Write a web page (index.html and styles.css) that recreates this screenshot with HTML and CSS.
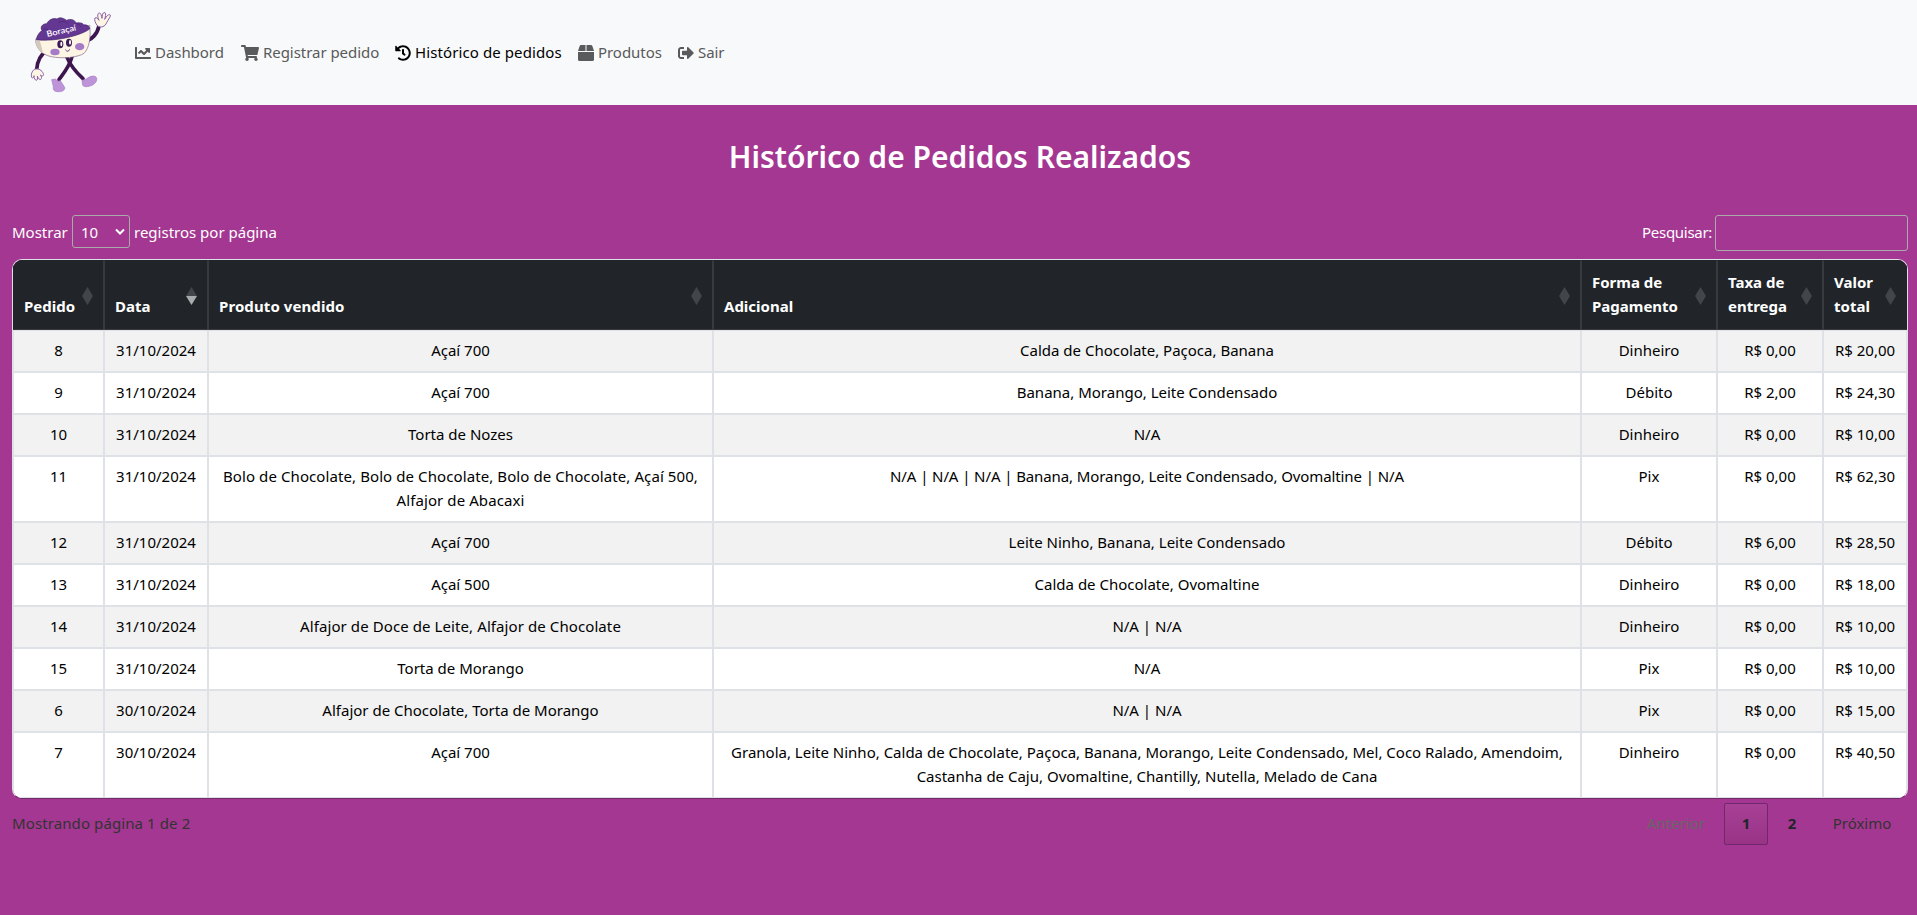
FILE: index.html
```
<!DOCTYPE html>
<html lang="pt-BR">
<head>
<meta charset="utf-8">
<title>Histórico de Pedidos</title>
<link rel="stylesheet" href="styles.css">
</head>
<body>
<nav class="navbar">
  <svg class="mascot" viewBox="0 0 390 315" aria-label="Boraçaí">
    <g fill="none" stroke="#3d164f" stroke-width="11" stroke-linecap="round">
      <path d="M252 123C276 121 292 101 297 78"/>
      <path d="M139 153C120 165 112 184 110 208"/>
      <path d="M201 172C213 201 232 220 249 236"/>
      <path d="M216 170C208 201 191 220 177 239"/>
    </g>
    <path d="M107 117C106 142 124 164 154 170C187 177 235 172 252 160C268 145 273 110 269 76Z" fill="#fdf5e4" stroke="#80628c" stroke-width="2"/>
    <path d="M107 117C106 138 116 153 130 161L120 124Z" fill="#d3c9bd"/>
    <path d="M109 119C111 105 119 98 126 91C119 82 127 71 140 71C146 60 158 53 171 57C181 49 194 57 200 61C212 54 226 61 228 69C240 67 249 69 251 75C260 73 269 79 269 87C240 108 163 126 109 119Z" fill="#643792" stroke="#46266c" stroke-width="2"/>
    <path d="M127 91Q134 82 144 89M176 68Q193 59 202 70M225 71Q237 68 243 81" fill="none" stroke="#53297f" stroke-width="3"/>
    <text class="brand" x="142" y="111" transform="rotate(-13 142 111)" textLength="90" lengthAdjust="spacingAndGlyphs">Boraçaí</text>
    <g fill="#a57bc8"><ellipse cx="165" cy="156" rx="14" ry="10"/><ellipse cx="239" cy="140" rx="14" ry="11"/></g>
    <g fill="#3b1a55"><ellipse cx="181" cy="133" rx="9" ry="12"/><ellipse cx="207" cy="128" rx="9" ry="12"/></g>
    <g fill="#fff"><ellipse cx="184" cy="132" rx="3" ry="7"/><ellipse cx="210" cy="127" rx="3" ry="7"/></g>
    <path d="M196 149Q204 159 209 148" fill="none" stroke="#643792" stroke-width="3"/>
    <g fill="#fdf5e4" stroke="#8a62aa" stroke-width="3" stroke-linejoin="round">
      <path d="M293 78C286 70 282 59 285 54C290 51 294 56 297 61C291 48 293 39 298 39C303 39 305 48 306 55C306 43 310 35 315 38C319 42 316 51 314 58C320 47 327 41 331 45C333 49 325 58 320 68C315 80 304 84 293 78Z"/>
      <path d="M103 208C95 214 92 225 95 232C98 237 102 231 102 227C102 237 107 243 111 240C114 237 112 230 112 228C116 239 122 241 124 236C126 232 123 228 121 225C128 231 132 227 130 221C126 211 116 204 103 208Z"/>
    </g>
    <g fill="#bd94d7" stroke="#a879c7" stroke-width="2">
      <path d="M155 239L166 237L174 244L181 242L194 262C196 271 186 276 174 275C164 275 158 270 160 260Z"/>
      <path d="M246 241L258 238C266 230 280 225 288 231C294 240 288 249 276 256C264 261 252 262 248 256Z"/>
    </g>
  </svg>
  <a class="link link-dash"><svg class="icon" viewBox="0 0 512 512"><path d="M496 384H64V80c0-8.84-7.16-16-16-16H16C7.16 64 0 71.16 0 80v336c0 17.67 14.33 32 32 32h464c8.84 0 16-7.16 16-16v-32c0-8.84-7.16-16-16-16zM464 96H345.94c-21.38 0-32.09 25.85-16.97 40.97l32.4 32.4L288 242.75l-73.37-73.37c-12.5-12.5-32.76-12.5-45.25 0l-68.69 68.69c-6.25 6.25-6.25 16.38 0 22.63l22.62 22.62c6.25 6.25 16.38 6.25 22.63 0L192 237.25l73.37 73.37c12.5 12.5 32.76 12.5 45.25 0l96-96 32.4 32.4c15.12 15.12 40.97 4.41 40.97-16.97V112c.01-8.84-7.15-16-15.99-16z"/></svg><span class="label">Dashbord</span></a>
  <a class="link link-cart"><svg class="icon wide" viewBox="0 0 576 512"><path d="M528.12 301.319l47.273-208C578.806 78.301 567.391 64 551.99 64H159.208l-9.166-44.81C147.758 8.021 137.93 0 126.529 0H24C10.745 0 0 10.745 0 24v16c0 13.255 10.745 24 24 24h69.883l70.248 343.435C147.325 417.1 136 435.222 136 456c0 30.928 25.072 56 56 56s56-25.072 56-56c0-15.674-6.447-29.835-16.824-40h209.647C430.447 426.165 424 440.326 424 456c0 30.928 25.072 56 56 56s56-25.072 56-56c0-22.172-12.888-41.332-31.579-50.405l5.517-24.276c3.413-15.018-8.002-29.319-23.403-29.319H218.117l-6.545-32h293.145c11.206 0 20.92-7.754 23.403-18.681z"/></svg><span class="label">Registrar pedido</span></a>
  <a class="link link-history active"><svg class="icon" viewBox="0 0 512 512"><path d="M504 255.531c.253 136.64-111.18 248.372-247.82 248.468-59.015.042-113.223-20.53-155.822-54.911-11.077-8.94-11.905-25.541-1.839-35.607l11.267-11.267c8.609-8.609 22.353-9.551 31.891-1.984C173.062 425.135 212.781 440 256 440c101.705 0 184-82.311 184-184 0-101.705-82.311-184-184-184-48.814 0-93.149 18.969-126.068 49.932l50.754 50.754c10.08 10.08 2.941 27.314-11.313 27.314H24c-8.837 0-16-7.163-16-16V38.627c0-14.254 17.234-21.393 27.314-11.314l49.372 49.372C129.209 34.136 189.552 8 256 8c136.81 0 247.747 110.78 248 247.531zm-180.912 78.784l9.823-12.63c8.138-10.463 6.253-25.542-4.21-33.679L288 256.349V152c0-13.255-10.745-24-24-24h-16c-13.255 0-24 10.745-24 24v135.651l65.409 50.874c10.463 8.137 25.541 6.253 33.679-4.21z"/></svg><span class="label">Histórico de pedidos</span></a>
  <a class="link link-box"><svg class="icon" viewBox="0 0 512 512"><path d="M509.5 184.6L458.9 32.8C452.4 13.2 434.1 0 413.4 0H272v192h238.7c-.4-2.5-.4-5-1.2-7.4zM240 0H98.6c-20.7 0-39 13.2-45.5 32.8L2.5 184.6c-.8 2.4-.8 4.9-1.2 7.4H240V0zM0 224v240c0 26.5 21.5 48 48 48h416c26.5 0 48-21.5 48-48V224H0z"/></svg><span class="label">Produtos</span></a>
  <a class="link"><svg class="icon" viewBox="0 0 512 512"><path d="M497 273L329 441c-15 15-41 4.5-41-17v-96H152c-13.3 0-24-10.7-24-24v-96c0-13.3 10.7-24 24-24h136V88c0-21.4 25.9-32 41-17l168 168c9.3 9.4 9.3 24.6 0 34zM192 436v-40c0-6.6-5.4-12-12-12H96c-17.7 0-32-14.3-32-32V160c0-17.7 14.3-32 32-32h84c6.6 0 12-5.4 12-12V76c0-6.6-5.4-12-12-12H96c-53 0-96 43-96 96v192c0 53 43 96 96 96h84c6.6 0 12-5.4 12-12z"/></svg><span class="label">Sair</span></a>
</nav>
<main class="content">
  <h2 class="title">Histórico de Pedidos Realizados</h2>
  <div class="controls">
    <div class="length"><span class="length-label">Mostrar</span><span class="select">10<svg class="chevron" viewBox="0 0 10 8"><path d="M1 1.5L5 5.5L9 1.5" fill="none" stroke="currentColor" stroke-width="2"/></svg></span><span>registros por página</span></div>
    <label class="search"><span class="label">Pesquisar:</span><input class="search-input" type="text"></label>
  </div>
  <div class="table-wrap">
    <table class="orders">
      <colgroup><col class="c-id"><col class="c-date"><col class="c-product"><col class="c-extra"><col class="c-pay"><col class="c-fee"><col class="c-total"></colgroup>
      <thead><tr>
        <th>Pedido<i class="sort"></i></th><th>Data<i class="sort desc"></i></th><th class="spaced">Produto vendido<i class="sort"></i></th><th>Adicional<i class="sort"></i></th><th>Forma de<br>Pagamento<i class="sort"></i></th><th>Taxa de<br>entrega<i class="sort"></i></th><th>Valor<br>total<i class="sort"></i></th>
      </tr></thead>
      <tbody>
        <tr><td>8</td><td>31/10/2024</td><td>Açaí 700</td><td>Calda de Chocolate, Paçoca, Banana</td><td>Dinheiro</td><td>R$ 0,00</td><td>R$ 20,00</td></tr>
        <tr><td>9</td><td>31/10/2024</td><td>Açaí 700</td><td>Banana, Morango, Leite Condensado</td><td>Débito</td><td>R$ 2,00</td><td>R$ 24,30</td></tr>
        <tr><td>10</td><td>31/10/2024</td><td>Torta de Nozes</td><td>N/A</td><td>Dinheiro</td><td>R$ 0,00</td><td>R$ 10,00</td></tr>
        <tr><td>11</td><td>31/10/2024</td><td class="spaced">Bolo de Chocolate, Bolo de Chocolate, Bolo de Chocolate, Açaí 500,<br>Alfajor de Abacaxi</td><td class="tight">N/A | N/A | N/A | Banana, Morango, Leite Condensado, Ovomaltine | N/A</td><td>Pix</td><td>R$ 0,00</td><td>R$ 62,30</td></tr>
        <tr><td>12</td><td>31/10/2024</td><td>Açaí 700</td><td>Leite Ninho, Banana, Leite Condensado</td><td>Débito</td><td>R$ 6,00</td><td>R$ 28,50</td></tr>
        <tr><td>13</td><td>31/10/2024</td><td>Açaí 500</td><td>Calda de Chocolate, Ovomaltine</td><td>Dinheiro</td><td>R$ 0,00</td><td>R$ 18,00</td></tr>
        <tr><td>14</td><td>31/10/2024</td><td class="spaced">Alfajor de Doce de Leite, Alfajor de Chocolate</td><td>N/A | N/A</td><td>Dinheiro</td><td>R$ 0,00</td><td>R$ 10,00</td></tr>
        <tr><td>15</td><td>31/10/2024</td><td>Torta de Morango</td><td>N/A</td><td>Pix</td><td>R$ 0,00</td><td>R$ 10,00</td></tr>
        <tr><td>6</td><td>30/10/2024</td><td>Alfajor de Chocolate, Torta de Morango</td><td>N/A | N/A</td><td>Pix</td><td>R$ 0,00</td><td>R$ 15,00</td></tr>
        <tr><td>7</td><td>30/10/2024</td><td>Açaí 700</td><td>Granola, Leite Ninho, Calda de Chocolate, Paçoca, Banana, Morango, Leite Condensado, Mel, Coco Ralado, Amendoim,<br>Castanha de Caju, Ovomaltine, Chantilly, Nutella, Melado de Cana</td><td>Dinheiro</td><td>R$ 0,00</td><td>R$ 40,50</td></tr>
      </tbody>
    </table>
  </div>
  <div class="footer">
    <span class="info">Mostrando página 1 de 2</span>
    <div class="pages"><a class="page disabled">Anterior</a><a class="page number current">1</a><a class="page number">2</a><a class="page">Próximo</a></div>
  </div>
</main>
</body>
</html>
```
FILE: styles.css
```
* { box-sizing: border-box; }
body {
  margin: 0;
  min-height: 100vh;
  background: #a43791;
  color: #212529;
  font: 15px/24px "Noto Sans", "Open Sans", sans-serif;
}
.navbar {
  display: flex;
  align-items: center;
  height: 105px;
  background: #f8f9fa;
}
.mascot { width: 130px; height: 105px; margin-right: 5px; flex: none; }
.brand { font: 600 25px Lato, sans-serif; fill: #fff; }
.link { display: flex; align-items: center; gap: 4px; color: #595a5b; white-space: nowrap; letter-spacing: -0.05px; }
.link.active { color: #000; letter-spacing: 0.1px; }
.label { padding-bottom: 2px; }
.link-dash { width: 106px; }
.link-cart { width: 154px; }
.link-history { width: 183px; }
.link-box { width: 100px; }
.icon { width: 16px; height: 16px; fill: currentColor; flex: none; }
.icon.wide { width: 18px; }
.content { padding: 33px 9px 0 12px; }
.title {
  margin: 0;
  height: 39px;
  font-size: 30px;
  line-height: 38px;
  font-weight: 600;
  text-align: center;
  color: #fff;
}
.controls {
  display: flex;
  justify-content: space-between;
  height: 82px;
  padding-top: 38px;
  color: #fff;
}
.length { display: flex; align-items: center; gap: 4px; height: 33px; }
.length-label { width: 56px; }
.select {
  display: flex;
  align-items: center;
  justify-content: space-between;
  width: 58px;
  height: 33px;
  padding: 0 4px 0 8px;
  border: 1px solid #aaa;
  border-radius: 3px;
}
.chevron { width: 10px; height: 8px; }
.search { display: flex; align-items: center; gap: 3px; height: 36px; letter-spacing: -0.3px; }
.search-input {
  width: 193px;
  height: 36px;
  border: 1px solid #aaa;
  border-radius: 3px;
  background: transparent;
}
.table-wrap {
  width: 1896px;
  height: 540px;
  border: 1px solid #dee2e6;
  border-bottom-color: #712b69;
  border-radius: 10px;
  overflow: hidden;
}
.orders { width: 1894px; table-layout: fixed; border-collapse: separate; border-spacing: 0; color: #000; }
.c-id { width: 91px; }
.c-date { width: 104px; }
.c-product { width: 505px; }
.c-extra { width: 868px; }
.c-pay { width: 136px; }
.c-fee { width: 106px; }
.c-total { width: 84px; }
.orders th {
  position: relative;
  height: 70px;
  padding: 9px 10px 11px;
  border: 1px solid #373b3e;
  border-top-color: #212529;
  background: #212529;
  color: #fff;
  font-weight: 700;
  text-align: left;
  vertical-align: bottom;
  white-space: nowrap;
}
.orders th:first-child { border-left-color: #212529; }
.orders th:last-child { border-right-color: #212529; }
.orders td {
  padding: 7px 0 9px;
  border: 1px solid #dee2e6;
  background: #fff;
  text-align: center;
  vertical-align: top;
  white-space: nowrap;
}
.orders .spaced { letter-spacing: 0.09px; }
.orders .tight { letter-spacing: -0.1px; }
.orders tbody tr:nth-child(odd) td { background: #f2f2f2; }
.sort { position: absolute; right: 10px; top: 26px; width: 11px; height: 18px; }
.sort::before, .sort::after {
  content: "";
  display: block;
  height: 9px;
  background: #42464a;
  clip-path: polygon(50% 0, 100% 100%, 0 100%);
}
.sort::after { clip-path: polygon(0 0, 100% 0, 50% 100%); }
.sort.desc::after { background: #a9abac; }
.footer { display: flex; justify-content: space-between; padding-top: 4px; line-height: 40px; color: #333; }
.info { letter-spacing: 0.1px; }
.pages { display: flex; gap: 2px; }
.page { width: 92px; height: 42px; border: 1px solid transparent; border-radius: 2px; line-height: 39px; text-align: center; }
.page.disabled { color: #666; }
.page.number { width: 44px; font-weight: 700; color: #212529; }
.page.current { border-color: #72266b; background: linear-gradient(#a84196, #983386); }
```
